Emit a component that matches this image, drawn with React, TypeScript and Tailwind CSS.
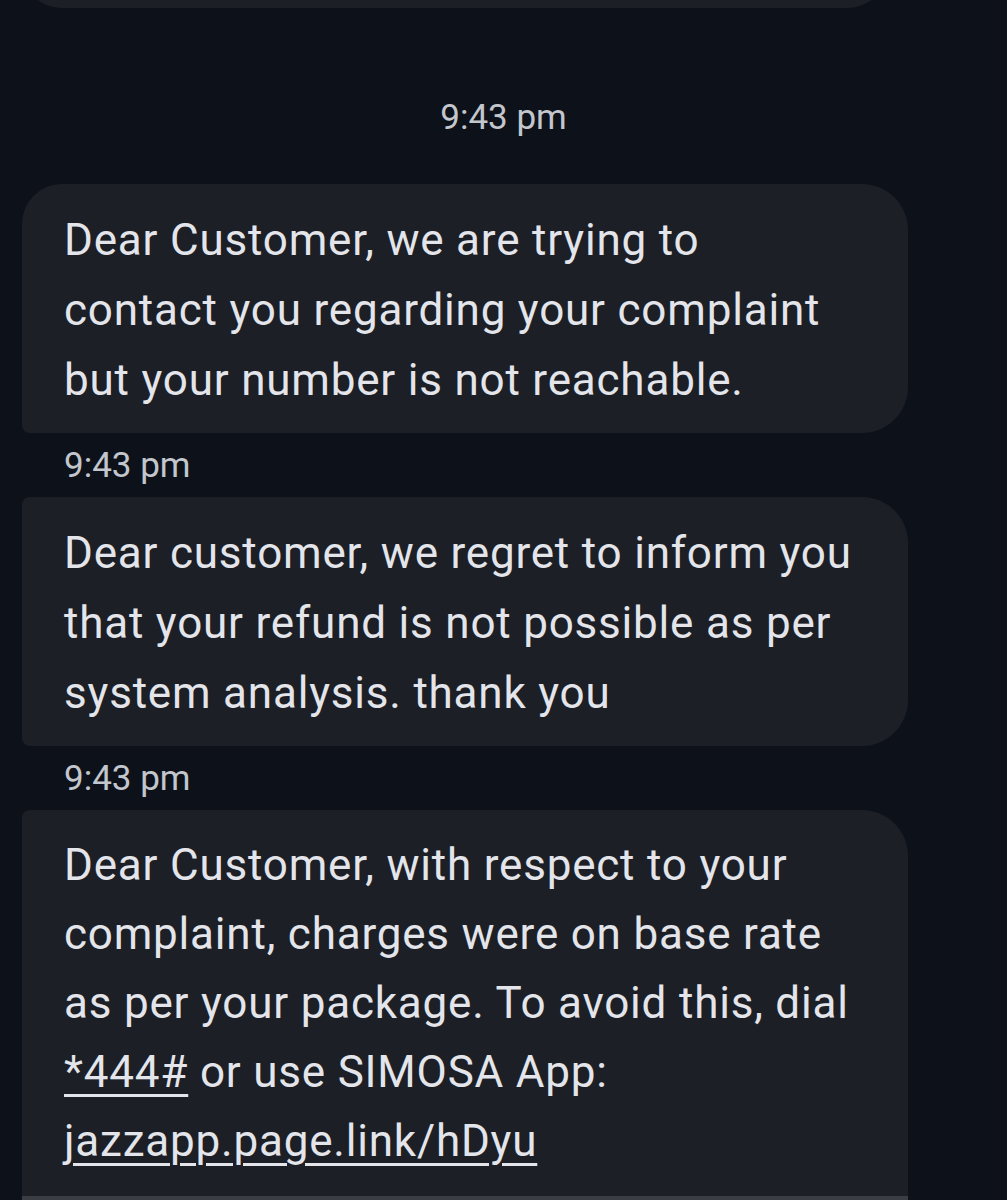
import React from "react";

const messages = [
  {
    id: 1,
    lines: ["Dear Customer, we are trying to", "contact you regarding your complaint", "but your number is not reachable."],
    corners: "rounded-tl-[40px] rounded-tr-[46px] rounded-br-[46px] rounded-bl-[8px]",
  },
  {
    id: 2,
    lines: ["Dear customer, we regret to inform you", "that your refund is not possible as per", "system analysis. thank you"],
    corners: "rounded-tl-[8px] rounded-tr-[46px] rounded-br-[46px] rounded-bl-[8px]",
  },
];

function Stamp({ center = false }: { center?: boolean }) {
  return (
    <div
      className={`h-[64px] flex items-center text-[35px] leading-none text-[#c3c6cc] ${
        center ? "justify-center" : "pl-[64px]"
      }`}
    >
      9:43 pm
    </div>
  );
}

export default function App() {
  return (
    <div
      className="w-[1007px] h-[1200px] overflow-hidden bg-[#0d121a] text-[#e3e5ea]"
      style={{ fontFamily: "Roboto, 'Noto Sans', sans-serif" }}
    >
      {/* previous bubble, cut off by the top edge */}
      <div className="h-[8px] overflow-hidden flex flex-col justify-end">
        <div className="h-[100px] shrink-0 ml-[22px] w-[870px] bg-[#1c1f26] rounded-bl-[40px] rounded-br-[46px]" />
      </div>

      <div className="pt-[92px] pb-[48px] h-[176px] flex justify-center">
        <span className="text-[35px] leading-[36px] text-[#c3c6cc]">9:43 pm</span>
      </div>

      {messages.map((m) => (
        <div key={m.id}>
          <div
            className={`ml-[22px] w-[886px] bg-[#1c1f26] pl-[42px] pt-[21px] pb-[18px] text-[44px] leading-[70px] tracking-[0.8px] ${m.corners}`}
          >
            {m.lines.map((l) => (
              <div key={l} className="whitespace-nowrap">
                {l}
              </div>
            ))}
          </div>
          <Stamp />
        </div>
      ))}

      <div className="ml-[22px] w-[886px] bg-[#1c1f26] rounded-tl-[8px] rounded-tr-[46px] overflow-hidden">
        <div className="pl-[42px] pt-[21px] pb-[20px] text-[44px] leading-[69px] tracking-[0.8px]">
          <div className="whitespace-nowrap">Dear Customer, with respect to your</div>
          <div className="whitespace-nowrap">complaint, charges were on base rate</div>
          <div className="whitespace-nowrap">as per your package. To avoid this, dial</div>
          <div className="whitespace-nowrap">
            <span className="underline decoration-[3px] underline-offset-[7px]">*444#</span> or use SIMOSA App:
          </div>
          <div className="whitespace-nowrap">
            <span className="underline decoration-[3px] underline-offset-[7px]">jazzapp.page.link/hDyu</span>
          </div>
        </div>
        <div className="h-[6px] bg-[#3a3d44]" />
      </div>
    </div>
  );
}
